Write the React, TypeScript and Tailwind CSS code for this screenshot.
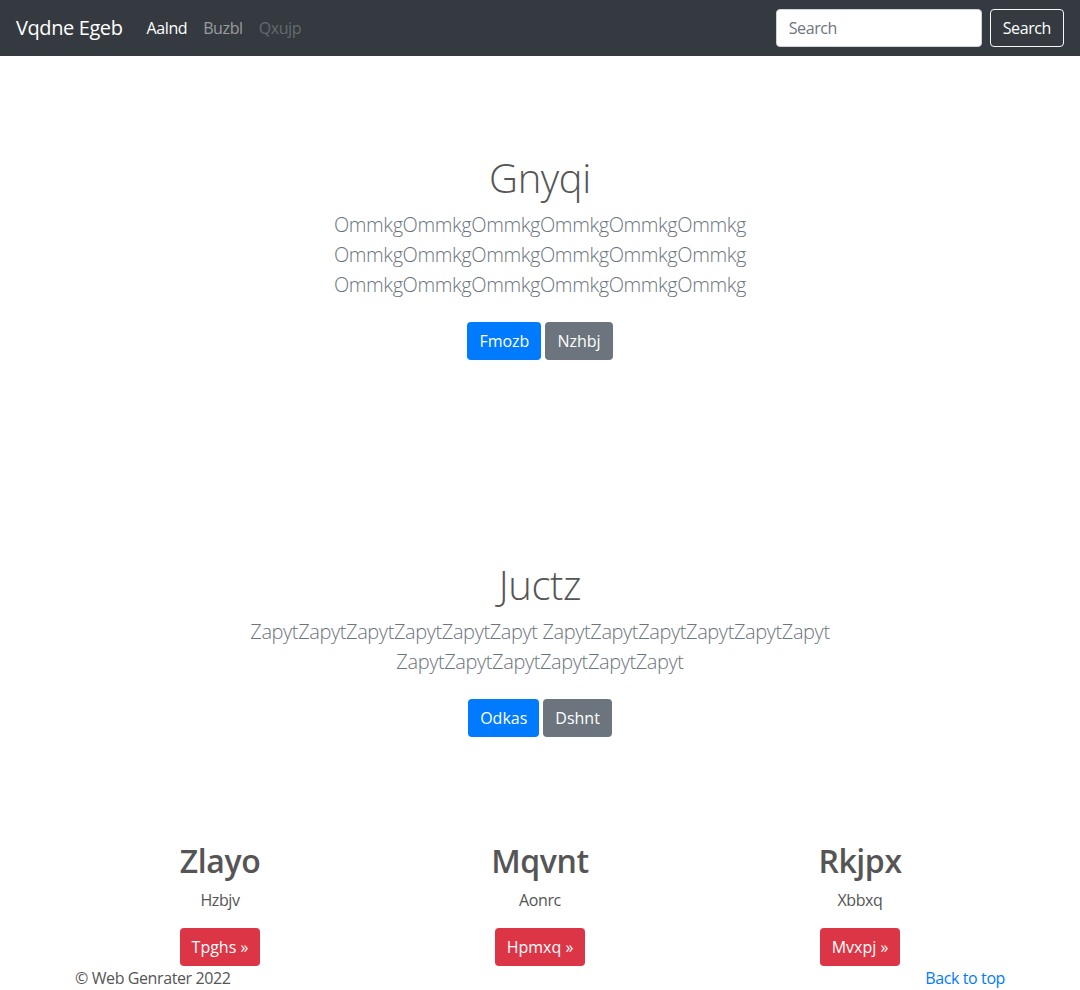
import React from 'react';

const groupA = 'OmmkgOmmkgOmmkgOmmkgOmmkgOmmkg';
const groupB = 'ZapytZapytZapytZapytZapytZapyt';

const features = [
  { title: 'Zlayo', text: 'Hzbjv', cta: 'Tpghs' },
  { title: 'Mqvnt', text: 'Aonrc', cta: 'Hpmxq' },
  { title: 'Rkjpx', text: 'Xbbxq', cta: 'Mvxpj' },
];

const Btn: React.FC<{ tone: 'blue' | 'gray' | 'red'; children: React.ReactNode }> = ({ tone, children }) => {
  const color =
    tone === 'blue' ? 'bg-[#007bff]' : tone === 'gray' ? 'bg-[#6c757d]' : 'bg-[#dc3545]';
  return (
    <button className={`${color} text-white text-[16px] leading-6 tracking-normal px-3 py-[7px] rounded`}>
      {children}
    </button>
  );
};

export default function App() {
  return (
    <div className="min-h-screen bg-white font-['Open_Sans','Noto_Sans',sans-serif] tracking-tight text-[#555]">
      {/* Navbar */}
      <nav className="h-14 bg-[#343a40] flex items-center px-4">
        <span className="text-white text-[20px] mr-4">Vqdne Egeb</span>
        <div className="flex text-[16px]">
          <a className="px-2 text-white">Aalnd</a>
          <a className="px-2 text-white/50">Buzbl</a>
          <a className="px-2 text-white/25">Qxujp</a>
        </div>
        <div className="ml-auto flex items-center gap-2">
          <input
            placeholder="Search"
            className="w-[206px] h-[38px] bg-white rounded px-3 text-[16px] tracking-tight border border-[#ced4da] placeholder:text-[#6c757d] outline-none"
          />
          <button className="h-[38px] px-3 rounded border border-[#f8f9fa] text-white text-[16px]">Search</button>
        </div>
      </nav>

      {/* Hero 1 */}
      <section className="pt-[98px] text-center">
        <h1 className="text-[40px] leading-[48px] font-light">Gnyqi</h1>
        <div className="mt-[8px] text-[20px] leading-[30px] font-light text-[#6c757d]">
          <p>{groupA}</p>
          <p>{groupA}</p>
          <p>{groupA}</p>
        </div>
        <div className="mt-[22px] flex justify-center gap-1">
          <Btn tone="blue">Fmozb</Btn>
          <Btn tone="gray">Nzhbj</Btn>
        </div>
      </section>

      {/* Hero 2 */}
      <section className="pt-[201px] text-center">
        <h1 className="text-[40px] leading-[48px] font-light">Juctz</h1>
        <div className="mt-[8px] text-[20px] leading-[30px] font-light text-[#6c757d]">
          <p>
            {groupB} {groupB}
          </p>
          <p>{groupB}</p>
        </div>
        <div className="mt-[22px] flex justify-center gap-1">
          <Btn tone="blue">Odkas</Btn>
          <Btn tone="gray">Dshnt</Btn>
        </div>
      </section>

      {/* Features */}
      <section className="pt-[105px] w-[960px] mx-auto grid grid-cols-3 text-center">
        {features.map((f) => (
          <div key={f.title} className="px-[15px]">
            <h2 className="text-[32px] leading-[38px] font-semibold">{f.title}</h2>
            <p className="mt-2 text-[16px] leading-6">{f.text}</p>
            <div className="mt-4">
              <Btn tone="red">{f.cta} &raquo;</Btn>
            </div>
          </div>
        ))}
      </section>

      {/* Footer */}
      <footer className="w-[960px] mx-auto px-[15px] flex justify-between text-[16px] leading-6">
        <p>&copy; Web Genrater 2022</p>
        <a className="text-[#007bff]">Back to top</a>
      </footer>
    </div>
  );
}
